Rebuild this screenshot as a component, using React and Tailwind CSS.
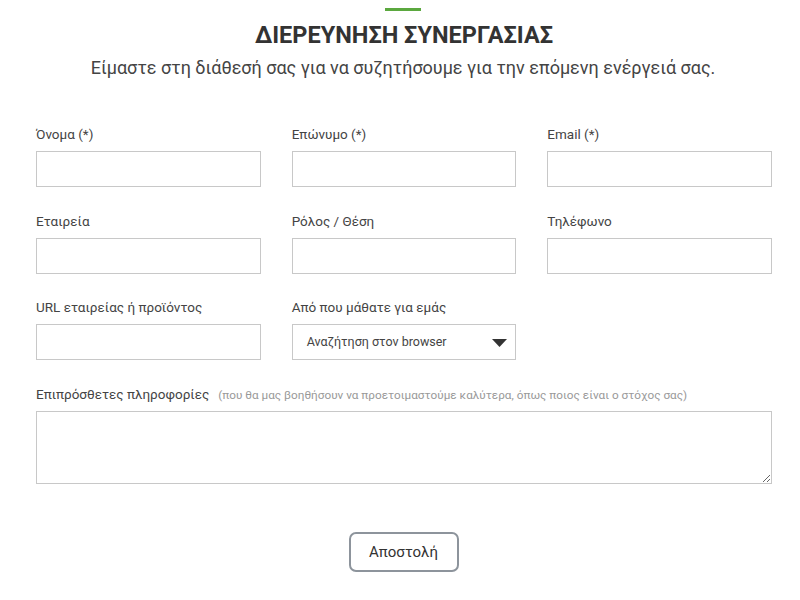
const FONT = { fontFamily: 'Roboto, "Noto Sans", sans-serif' }

function Field({ label, select }) {
  return (
    <div className="flex flex-col">
      <label className="text-[13.5px] leading-[20px] text-[#444] h-[20px] mb-[7px]">{label}</label>
      {select ? (
        <div className="relative h-[36px] border border-[#c8c8c8] bg-white flex items-center pl-[14px]">
          <span className="text-[12.5px] text-[#444]">Αναζήτηση στον browser</span>
          <svg className="absolute right-[8px] top-[14px]" width="15" height="8" viewBox="0 0 15 8">
            <path d="M0 0 H15 L7.5 8 Z" fill="#333" />
          </svg>
        </div>
      ) : (
        <input className="h-[36px] border border-[#c8c8c8] bg-white outline-none" />
      )}
    </div>
  )
}

export default function App() {
  return (
    <div className="w-[800px] h-[600px] bg-white overflow-hidden" style={FONT}>
      <div className="flex flex-col items-center pt-[8px]">
        <div className="w-[36px] h-[3px] bg-[#5ba83f] ml-[6px]" />
        <h1 className="mt-[9px] text-[23.5px] leading-[30px] font-bold text-[#333] pl-[8px]">
          ΔΙΕΡΕΥΝΗΣΗ ΣΥΝΕΡΓΑΣΙΑΣ
        </h1>
        <p className="mt-[5px] text-[18px] leading-[26px] text-[#444] pl-[6px]">
          Είμαστε στη διάθεσή σας για να συζητήσουμε για την επόμενη ενέργειά σας.
        </p>
      </div>

      <div className="ml-[36px] w-[736px] mt-[43px]">
        <div className="grid grid-cols-3 gap-x-[31px] gap-y-[23.5px]">
          <Field label="Όνομα (*)" />
          <Field label="Επώνυμο (*)" />
          <Field label="Email (*)" />
          <Field label="Εταιρεία" />
          <Field label="Ρόλος / Θέση" />
          <Field label="Τηλέφωνο" />
          <Field label="URL εταιρείας ή προϊόντος" />
          <Field label="Από που μάθατε για εμάς" select />
        </div>

        <div className="mt-[24px] flex flex-col">
          <label className="h-[20px] mb-[7px] leading-[20px] text-[#444]">
            <span className="text-[13.5px]">Επιπρόσθετες πληροφορίες</span>
            <span className="text-[11.75px] text-[#999] ml-[9px]">
              (που θα μας βοηθήσουν να προετοιμαστούμε καλύτερα, όπως ποιος είναι ο στόχος σας)
            </span>
          </label>
          <textarea className="h-[73px] border border-[#c8c8c8] bg-white outline-none resize-y block" />
        </div>
      </div>

      <div className="flex justify-center mt-[48px] pl-[7px]">
        <button className="w-[110px] h-[40px] border-2 border-[#8d949c] rounded-[7px] bg-white text-[15px] text-[#333]">
          Αποστολή
        </button>
      </div>
    </div>
  )
}
